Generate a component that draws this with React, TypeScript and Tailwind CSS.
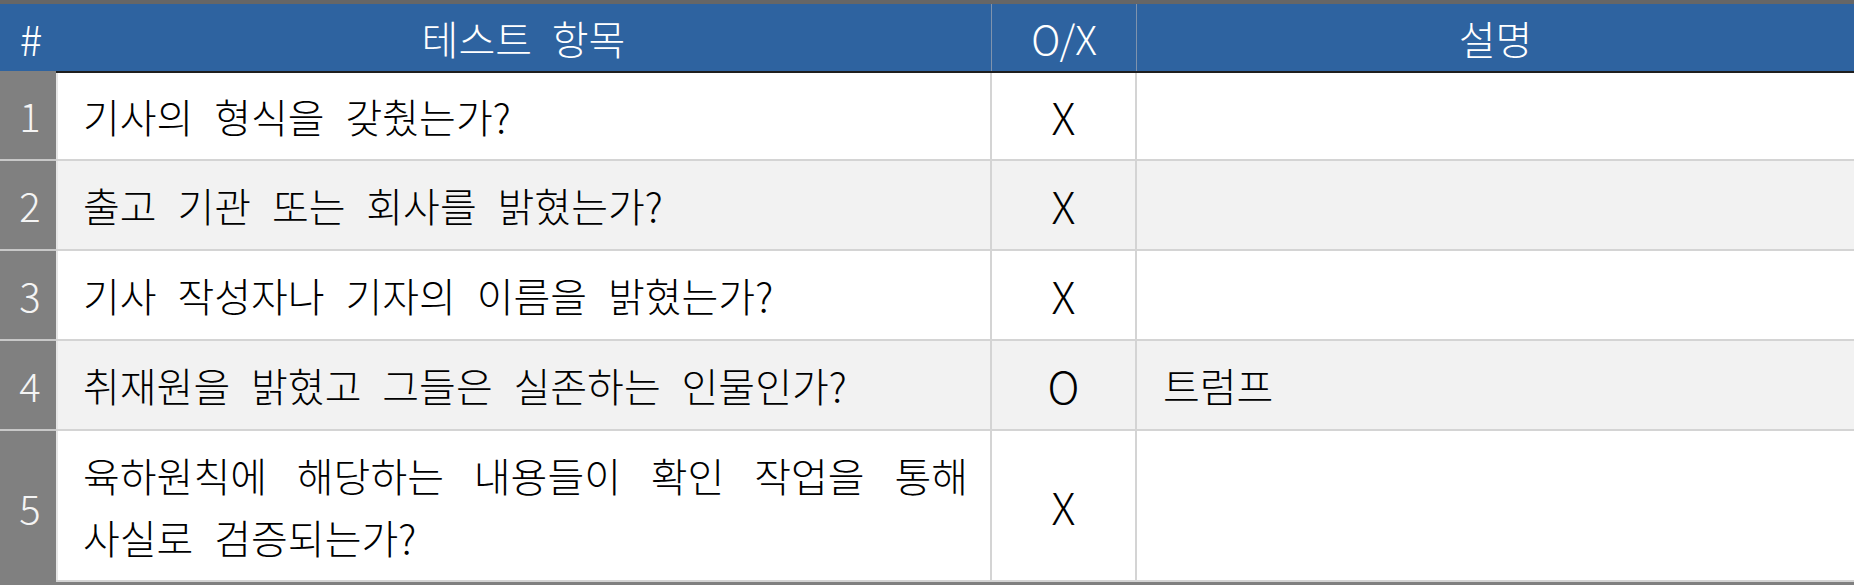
import React from "react";

type Row = {
  no: number;
  lines: string[];
  ox: string;
  note?: string;
  alt?: boolean;
  tall?: boolean;
};

const rows: Row[] = [
  { no: 1, lines: ["기사의 형식을 갖췄는가?"], ox: "X" },
  { no: 2, lines: ["출고 기관 또는 회사를 밝혔는가?"], ox: "X", alt: true },
  { no: 3, lines: ["기사 작성자나 기자의 이름을 밝혔는가?"], ox: "X" },
  { no: 4, lines: ["취재원을 밝혔고 그들은 실존하는 인물인가?"], ox: "O", note: "트럼프", alt: true },
  {
    no: 5,
    lines: ["육하원칙에 해당하는 내용들이 확인 작업을 통해", "사실로 검증되는가?"],
    ox: "X",
    tall: true,
  },
];

const font = "font-['Noto_Sans_CJK_KR','Noto_Sans',sans-serif]";

export default function App() {
  return (
    <div
      className={`w-[1854px] h-[585px] bg-white border-t-4 border-t-[#666666] border-b-[3px] border-b-[#808080] flex flex-col font-light ${font}`}
    >
      {/* header */}
      <div className="flex h-[67px] bg-[#2e63a0] text-white text-[40px] leading-none shrink-0 [word-spacing:11px]">
        <div className="w-[56px] flex items-center justify-center pl-[6px] text-[42px]">#</div>
        <div className="w-[936px] flex items-center justify-center border-r border-[#7f93ad]">테스트 항목</div>
        <div className="w-[145px] flex items-center justify-center border-r border-[#7f93ad]">O/X</div>
        <div className="flex-1 flex items-center justify-center">설명</div>
      </div>

      {/* body */}
      <div className="flex flex-col flex-1">
        {rows.map((r) => (
          <div
            key={r.no}
            className={`flex text-[40px] text-black [word-spacing:12px] ${r.tall ? "flex-1" : "h-[90px]"} ${
              r.alt ? "bg-[#f2f2f2]" : "bg-white"
            }`}
          >
            <div
              className={`w-[56px] shrink-0 bg-[#808080] text-[#f4f4f4] flex items-center justify-center pl-[4px] ${
                r.tall ? "" : "border-b-2 border-[#c8c8c8]"
              }`}
            >
              {r.no}
            </div>
            <div
              className={`flex flex-1 border-b-2 border-b-[#d4d4d4] ${r.no === 1 ? "border-t-2 border-t-[#1e1e1e]" : ""}`}
            >
              <div className="w-[936px] shrink-0 border-l-2 border-[#e6e6e6] border-r-2 border-r-[#d4d4d4] flex flex-col justify-center pl-[25px] pr-[22px] leading-[62px]">
                {r.lines.map((l, i) =>
                  r.lines.length > 1 && i === 0 ? (
                    <div key={i} className="text-justify [text-align-last:justify]">
                      {l}
                    </div>
                  ) : (
                    <div key={i}>{l}</div>
                  )
                )}
              </div>
              <div className="w-[145px] shrink-0 border-r-2 border-[#d4d4d4] flex items-center justify-center text-[44px]">
                {r.ox}
              </div>
              <div className="flex-1 flex items-center pl-[26px]">{r.note}</div>
            </div>
          </div>
        ))}
      </div>
    </div>
  );
}
